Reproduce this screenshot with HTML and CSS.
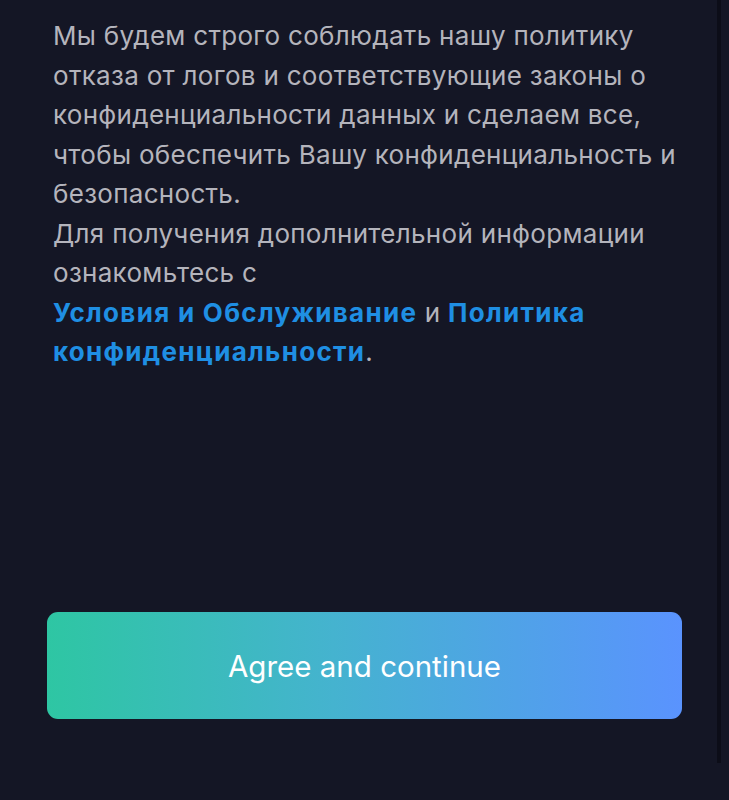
FILE: index.html
```html
<!DOCTYPE html>
<html lang="ru">
<head>
<meta charset="utf-8">
<link rel="stylesheet" href="styles.css">
</head>
<body>
<div class="screen">
  <div class="content">
    <p class="text">Мы будем строго соблюдать нашу политику отказа от логов и соответствующие законы о конфиденциальности данных и сделаем все, чтобы обеспечить Вашу конфиденциальность и безопасность.<br>Для получения дополнительной информации ознакомьтесь с<br><a class="link" href="#">Условия и Обслуживание</a> и <a class="link" href="#">Политика конфиденциальности</a>.</p>
  </div>
  <div class="actions">
    <button class="btn">Agree and continue</button>
  </div>
  <div class="scrollbar"></div>
</div>
</body>
</html>
```

FILE: styles.css
```css
html, body {
  margin: 0;
  padding: 0;
  background: #141625;
}
.screen {
  position: relative;
  width: 729px;
  height: 800px;
  display: flex;
  flex-direction: column;
  font-family: Inter, "Noto Sans", sans-serif;
}
.content {
  padding: 16px 36px 0 53px;
  flex: 1;
}
.text {
  margin: 0;
  font-size: 26px;
  line-height: 39.5px;
  color: #b4b4bc;
  letter-spacing: 0.3px;
}
.link {
  color: #1f8fe3;
  font-weight: 700;
  letter-spacing: 1.3px;
  text-decoration: none;
}
.actions {
  padding: 0 47px 81px 47px;
}
.btn {
  display: block;
  width: 635px;
  height: 107px;
  border: none;
  border-radius: 11px;
  background: linear-gradient(90deg, #2ec6a3 0%, #45b3cf 45%, #5a93fe 100%);
  color: #ffffff;
  font-family: Inter, "Noto Sans", sans-serif;
  font-size: 29.5px;
  font-weight: 400;
  padding: 0;
}
.scrollbar {
  position: absolute;
  left: 717px;
  top: 0;
  width: 4px;
  height: 763px;
  background: #0c0d18;
}
```
